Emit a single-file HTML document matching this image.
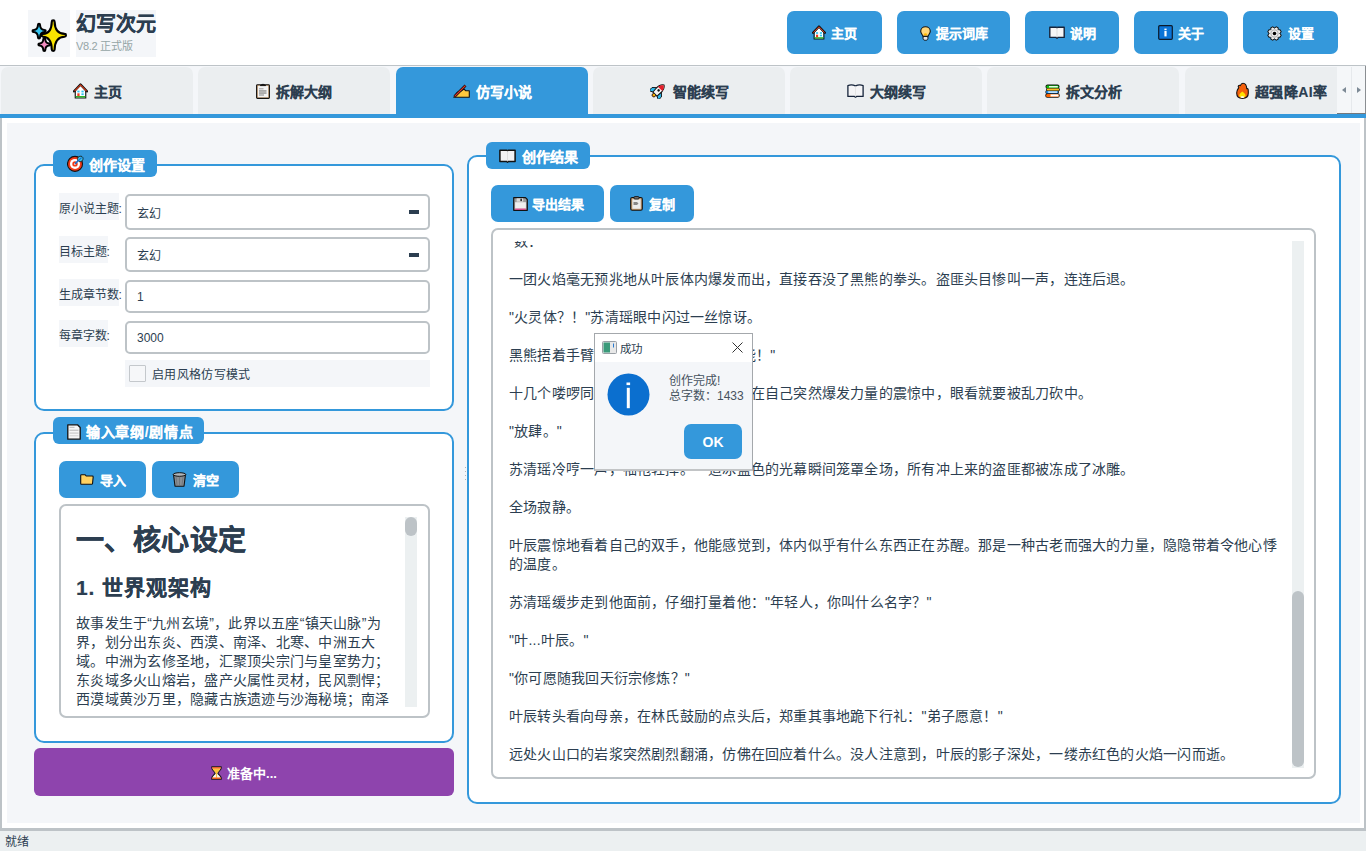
<!DOCTYPE html>
<html lang="zh-CN">
<head>
<meta charset="utf-8">
<style>
*{box-sizing:border-box;margin:0;padding:0}
html,body{width:1366px;height:851px;overflow:hidden;background:#f4f6f9}
body{position:relative;font-family:"Liberation Sans",sans-serif;color:#2c3e50}
.a{position:absolute}
svg{display:block}
.hdr{left:0;top:0;width:1366px;height:65px;background:#fff}
.hbtn{-webkit-text-stroke:0.15px currentColor;top:11px;height:43px;background:#3498db;border-radius:7px;color:#fff;font-size:13px;font-weight:bold;display:flex;align-items:center;justify-content:center;white-space:nowrap}
.hbtn svg{margin-right:5px}
.tab{-webkit-text-stroke:0.15px currentColor;top:67px;height:47px;width:192px;background:#ebeef0;border-radius:7px 7px 0 0;font-size:14px;font-weight:bold;color:#2c3e50;display:flex;align-items:center;justify-content:center;white-space:nowrap}
.tab svg{margin-right:6px}
.tab.sel{background:#3498db;color:#fff}
.gb{border:2px solid #3498db;border-radius:10px;background:#fff}
.badge{-webkit-text-stroke:0.15px currentColor;height:27px;background:#3498db;border-radius:6px;color:#fff;font-size:14px;font-weight:bold;display:flex;align-items:center;white-space:nowrap}
.btn{-webkit-text-stroke:0.15px currentColor;height:37px;background:#3498db;border-radius:7px;color:#fff;font-size:13px;font-weight:bold;display:flex;align-items:center;justify-content:center;white-space:nowrap}
.btn svg{margin-right:6px}
.lbl{left:59px;height:27px;background:#f4f6f9;font-size:12px;letter-spacing:-0.1px;color:#2c3e50;padding-top:6px;white-space:nowrap}
.inp{left:125px;width:305px;border:2px solid #bdc3c7;border-radius:5px;background:#fff;font-size:12px;color:#2c3e50;padding-left:10px;display:flex;align-items:center}
.dash{position:absolute;right:9.5px;top:50%;margin-top:-2px;width:10px;height:4px;background:#2c3e50}
.te{border:2px solid #bdc3c7;border-radius:7px;background:#fff;overflow:hidden}
.track{background:#ecf0f1}
.handle{background:#bdc3c7;border-radius:6px}
.p{position:absolute;left:0;font-size:14px;letter-spacing:0.22px;line-height:19px;white-space:nowrap;color:#2c3e50}
</style>
</head>
<body>
<!-- HEADER -->
<div class="a hdr"></div>
<div class="a" style="left:28px;top:10px;width:42px;height:47px;background:#f4f6f9"></div>
<svg class="a" style="left:25px;top:8px" width="50" height="50" viewBox="0 0 50 50">
<path d="M15.00 16.70 C15.10 20.16 16.57 21.90 19.70 22.00 A1.00 1.00 0 0 1 19.70 24.00 C16.57 24.10 15.10 25.88 15.00 29.40 A1.00 1.00 0 0 1 13.00 29.40 C12.90 25.88 11.53 24.10 8.50 24.00 A1.00 1.00 0 0 1 8.50 22.00 C11.53 21.90 12.90 20.16 13.00 16.70 A1.00 1.00 0 0 1 15.00 16.70Z" fill="#36c5f0" stroke="#000" stroke-width="2" stroke-linejoin="round"/>
<path d="M20.30 31.30 C20.40 34.16 21.51 35.40 24.20 35.50 A1.00 1.00 0 0 1 24.20 37.50 C21.51 37.60 20.40 38.98 20.30 42.00 A1.00 1.00 0 0 1 18.30 42.00 C18.20 38.98 17.09 37.60 14.40 37.50 A1.00 1.00 0 0 1 14.40 35.50 C17.09 35.40 18.20 34.16 18.30 31.30 A1.00 1.00 0 0 1 20.30 31.30Z" fill="#f38cc0" stroke="#000" stroke-width="2" stroke-linejoin="round"/>
<path d="M29.60 13.70 C29.80 21.18 33.33 25.70 39.60 25.90 A1.40 1.40 0 0 1 39.60 28.70 C33.33 28.90 29.80 33.73 29.60 41.60 A1.40 1.40 0 0 1 26.80 41.60 C26.60 33.73 23.61 28.90 18.00 28.70 A1.40 1.40 0 0 1 18.00 25.90 C23.61 25.70 26.60 21.18 26.80 13.70 A1.40 1.40 0 0 1 29.60 13.70Z" fill="#f9e400" stroke="#000" stroke-width="2.1" stroke-linejoin="round"/>
</svg>
<div class="a" style="left:76px;top:10px;width:80px;height:47px;background:#f4f6f9"></div>
<div class="a" style="left:76px;top:7.5px;font-size:20px;font-weight:bold;color:#2c3e50;white-space:nowrap;-webkit-text-stroke:0.3px #2c3e50">幻写次元</div>
<div class="a" style="left:76px;top:37px;font-size:11px;letter-spacing:-0.3px;color:#95a5a6;white-space:nowrap">V8.2 正式版</div>

<div class="a hbtn" style="left:787px;width:95px"><svg width="14" height="15" viewBox="0 0 16 17"><path d="M3 8.2 L8 3.2 L13 8.2 V15.6 H3Z" fill="#fff"/><path d="M2.4 8.2 V15.9 H13.6 V8.2" fill="none" stroke="#111" stroke-width="1.2"/><rect x="2.9" y="13.9" width="10.2" height="1.5" fill="#1db31d"/><rect x="4.6" y="8.1" width="2.4" height="1.9" fill="#30c6f2"/><rect x="9" y="8.1" width="2.4" height="1.9" fill="#30c6f2"/><rect x="9" y="11" width="2.4" height="1.9" fill="#30c6f2"/><rect x="4.6" y="11" width="2.4" height="3" fill="#f23c1c"/><path d="M1.2 8.8 L8 1.6 L14.8 8.8" fill="none" stroke="#111" stroke-width="2.6" stroke-linecap="round" stroke-linejoin="round"/><path d="M1.6 8.6 L8 2 L14.4 8.6" fill="none" stroke="#e8401c" stroke-width="1.1"/></svg>主页</div>
<div class="a hbtn" style="left:897px;width:113px"><svg width="11" height="15" viewBox="0 0 11 15" style="margin-right:5px;position:relative;top:0.8px"><path d="M5.5 0.7 C8.2 0.7 10.3 2.7 10.3 5.3 C10.3 7.3 8.6 8.6 7.9 10.4 H3.1 C2.4 8.6 0.7 7.3 0.7 5.3 C0.7 2.7 2.8 0.7 5.5 0.7Z" fill="#ffd77a" stroke="#111" stroke-width="1.1"/><ellipse cx="5.5" cy="8.4" rx="1.6" ry="1.2" fill="#ffb800"/><path d="M3.1 10.4 H7.9 V12.6 C7.9 13.6 7 14.3 5.5 14.3 C4 14.3 3.1 13.6 3.1 12.6Z" fill="#e6e6e6" stroke="#111" stroke-width="1"/></svg>提示词库</div>
<div class="a hbtn" style="left:1025px;width:94px"><svg width="16" height="13" viewBox="0 0 16 13"><path d="M0.8 1.2 H7.4 L8 1.7 L8.6 1.2 H15.2 V11.4 H9 L8 12.2 L7 11.4 H0.8Z" fill="#f6f6f6" stroke="#15233a" stroke-width="1.4" stroke-linejoin="round"/><path d="M8 1.8 V11.6" stroke="#d0d0d0" stroke-width="0.6"/></svg>说明</div>
<div class="a hbtn" style="left:1134px;width:94px"><svg width="15" height="15" viewBox="0 0 15 15"><rect x="0.7" y="0.7" width="13.6" height="13.6" rx="1" fill="#0a74d8" stroke="#0d1a2a" stroke-width="1.2"/><rect x="6.4" y="3.6" width="2.2" height="1.6" fill="#fff"/><rect x="6.4" y="6" width="2.2" height="5.4" fill="#fff"/></svg>关于</div>
<div class="a hbtn" style="left:1243px;width:95px"><svg width="15" height="15" viewBox="0 0 15 15" style="margin-right:5px;position:relative;left:-1px;top:0.5px"><path d="M8.02 2.02 L8.85 0.73 L11.33 1.76 L11.01 3.26 L11.74 3.99 L13.24 3.67 L14.27 6.15 L12.98 6.98 L12.98 8.02 L14.27 8.85 L13.24 11.33 L11.74 11.01 L11.01 11.74 L11.33 13.24 L8.85 14.27 L8.02 12.98 L6.98 12.98 L6.15 14.27 L3.67 13.24 L3.99 11.74 L3.26 11.01 L1.76 11.33 L0.73 8.85 L2.02 8.02 L2.02 6.98 L0.73 6.15 L1.76 3.67 L3.26 3.99 L3.99 3.26 L3.67 1.76 L6.15 0.73 L6.98 2.02Z" fill="#eeeeee" stroke="#111" stroke-width="1" stroke-linejoin="round"/><circle cx="7.5" cy="7.5" r="3.6" fill="none" stroke="#b8b8b8" stroke-width="1.2"/><circle cx="7.5" cy="7.5" r="1.8" fill="#000"/></svg>设置</div>

<!-- TAB BAR -->
<div class="a" style="left:0;top:65px;width:1366px;height:1px;background:#bdc3c7"></div>
<div class="a tab" style="left:1px"><svg width="15" height="16" viewBox="0 0 16 17"><path d="M3 8.2 L8 3.2 L13 8.2 V15.6 H3Z" fill="#fff"/><path d="M2.4 8.2 V15.9 H13.6 V8.2" fill="none" stroke="#111" stroke-width="1.2"/><rect x="2.9" y="13.9" width="10.2" height="1.5" fill="#1db31d"/><rect x="4.6" y="8.1" width="2.4" height="1.9" fill="#30c6f2"/><rect x="9" y="8.1" width="2.4" height="1.9" fill="#30c6f2"/><rect x="9" y="11" width="2.4" height="1.9" fill="#30c6f2"/><rect x="4.6" y="11" width="2.4" height="3" fill="#f23c1c"/><path d="M1.2 8.8 L8 1.6 L14.8 8.8" fill="none" stroke="#111" stroke-width="2.6" stroke-linecap="round" stroke-linejoin="round"/><path d="M1.6 8.6 L8 2 L14.4 8.6" fill="none" stroke="#e8401c" stroke-width="1.1"/></svg>主页</div>
<div class="a tab" style="left:198px"><svg width="14" height="16" viewBox="0 0 14 16"><rect x="0.6" y="1.7" width="12.8" height="13.7" rx="0.9" fill="#c9a47c" stroke="#111" stroke-width="1.1"/><rect x="1.9" y="2.9" width="10.2" height="11.3" fill="#f3f3f3"/><path d="M4.3 2.6 Q7 -0.3 9.7 2.6Z" fill="#222" stroke="#111" stroke-width="0.9"/><rect x="3" y="5.3" width="4.5" height="1" fill="#9a9a9a"/><rect x="3" y="7.3" width="7.5" height="1.3" fill="#8a8a8a"/><rect x="3" y="9.4" width="7.5" height="1.3" fill="#8a8a8a"/><rect x="3" y="11.4" width="5" height="1.2" fill="#9a9a9a"/></svg>拆解大纲</div>
<div class="a tab sel" style="left:396px"><svg width="17" height="14" viewBox="0 0 17 14"><path d="M0.8 13.2 L4 8.5 C5 7.3 6.5 7 8 7 L11 5 L12.8 6.8 L16.3 6.8 V13.2 Z" fill="#ffc83d" stroke="#111" stroke-width="1.1" stroke-linejoin="round"/><path d="M1.5 12.5 L12.5 1.5" stroke="#111" stroke-width="2.6"/><path d="M1.6 12.4 L12.4 1.6" stroke="#e8352a" stroke-width="1.2"/></svg>仿写小说</div>
<div class="a tab" style="left:593px"><svg width="17" height="17" viewBox="0 0 24 24"><g transform="rotate(45 12 12)"><path d="M8.3 10 L2.6 15.5 V21.5 L8.8 18.8Z M15.7 10 L21.4 15.5 V21.5 L15.2 18.8Z" fill="#2cb9ee" stroke="#111" stroke-width="1.3" stroke-linejoin="round"/><ellipse cx="12" cy="21" rx="2.6" ry="2.8" fill="#f77f00" stroke="#111" stroke-width="1.1"/><ellipse cx="12" cy="20.6" rx="1.3" ry="1.6" fill="#ffd000"/><path d="M12 0.8 C16 3.5 17 8 16.5 13 L16 19 H8 L7.5 13 C7 8 8 3.5 12 0.8Z" fill="#f4f4f4" stroke="#111" stroke-width="1.4" stroke-linejoin="round"/><path d="M12 1.6 C14.8 3.6 16 6 16.3 8.8 H7.7 C8 6 9.2 3.6 12 1.6Z" fill="#e61e2a"/><circle cx="12" cy="11.8" r="1.8" fill="#111"/></g></svg>智能续写</div>
<div class="a tab" style="left:790px"><svg width="17" height="14" viewBox="0 0 17 14"><path d="M0.9 1.6 C3 0.8 6 0.8 8.5 1.9 C11 0.8 14 0.8 16.1 1.6 V12.4 H9.5 L8.5 13.2 L7.5 12.4 H0.9Z" fill="#f4f4f6" stroke="#15233a" stroke-width="1.3" stroke-linejoin="round"/><path d="M8.5 1.9 V12.6" stroke="#d8d8d8" stroke-width="0.6"/></svg>大纲续写</div>
<div class="a tab" style="left:987px"><svg width="15" height="14" viewBox="0 0 15 14"><rect x="0.5" y="0.6" width="14" height="4.2" rx="2" fill="#111"/><rect x="1" y="4" width="14" height="3" rx="1.5" fill="#111"/><rect x="0.3" y="6.3" width="13.7" height="3.6" rx="1.8" fill="#111"/><rect x="0.3" y="9.2" width="14.4" height="4.5" rx="2" fill="#111"/><rect x="1.3" y="1.5" width="12.4" height="2.5" rx="1.2" fill="#13c313"/><rect x="4" y="2.1" width="8.8" height="1.3" fill="#fff"/><rect x="1.8" y="4.6" width="12.4" height="1.8" rx="0.9" fill="#fbbf24"/><rect x="1" y="7" width="12.2" height="2.2" rx="1.1" fill="#1e90f0"/><rect x="3.2" y="7.5" width="9" height="1.2" fill="#fff"/><rect x="1" y="9.9" width="13" height="3.1" rx="1.5" fill="#fa6400"/><rect x="5.5" y="10.4" width="8" height="2.1" fill="#fff"/></svg>拆文分析</div>
<div class="a tab" style="left:1185px;width:152px;justify-content:flex-start;padding-left:51px;border-radius:7px 0 0 0;letter-spacing:0.4px"><svg width="13" height="17" viewBox="0 0 13 17"><path d="M6.5 16.4 C2.8 16.4 0.7 14.2 0.7 11 C0.7 8.5 1.8 7 2.8 5.6 C2.2 5.2 2 4.2 2.6 3.6 C3.2 3 4 3.2 4.3 3.6 C4.8 2.3 5.8 1.2 7 1.2 C9.4 1.2 10.6 4 10.8 6.8 C11.2 6.6 11.8 6.8 12.1 7.2 C12.3 8.4 12.3 9.8 12.3 11 C12.3 14.2 10.2 16.4 6.5 16.4Z" fill="#f4600c" stroke="#111" stroke-width="1.1" stroke-linejoin="round"/><path d="M6.5 15.8 C4.2 15.8 3.2 14.7 3.2 13.5 C3.2 12 4.6 10.5 6.3 9.4 C8 10.5 9.6 12 9.6 13.5 C9.6 14.7 8.6 15.8 6.5 15.8Z" fill="#ffe100"/><ellipse cx="6.4" cy="15.1" rx="1.9" ry="0.9" fill="#fff"/></svg>超强降AI率</div>
<div class="a" style="left:1337px;top:66px;width:29px;height:48px;background:#f5f7f9;border-right:1px solid #8a8e92;border-bottom:1px solid #74787c"></div>
<div class="a" style="left:1351px;top:67px;width:1px;height:46px;background:#e6e9ec"></div>
<div class="a" style="left:1342px;top:87px;width:0;height:0;border-top:3.5px solid transparent;border-bottom:3.5px solid transparent;border-right:4px solid #7d8a96"></div>
<div class="a" style="left:1357px;top:87px;width:0;height:0;border-top:3.5px solid transparent;border-bottom:3.5px solid transparent;border-left:4px solid #7d8a96"></div>
<div class="a" style="left:0;top:114px;width:1366px;height:4px;background:#3498db"></div>

<!-- PANE -->
<div class="a" style="left:0;top:118px;width:1366px;height:713px;background:#fff;border-left:2px solid #bdc3c7;border-right:2px solid #bdc3c7;border-bottom:3px solid #bdc3c7"></div>
<div class="a" style="left:7px;top:123px;width:1353px;height:700px;background:#f4f6f9"></div>

<!-- LEFT GROUP 1 -->
<div class="a gb" style="left:34px;top:164px;width:420px;height:247px"></div>
<div class="a badge" style="left:53px;top:150px;width:104px;padding-left:14px"><svg width="17" height="17" viewBox="0 0 17 17" style="margin-right:5px"><circle cx="8" cy="8.9" r="7.5" fill="#f03a17" stroke="#111" stroke-width="1.1"/><circle cx="8" cy="8.9" r="5" fill="#fff"/><circle cx="8" cy="8.9" r="2.7" fill="#f03a17"/><circle cx="8" cy="8.9" r="0.9" fill="#fff"/><path d="M8 8.9 L12.6 4.3" stroke="#1670d0" stroke-width="1.6"/><path d="M10.6 3.6 C11 2 12.5 1 14 1.2 C15.5 1.4 16.3 2.8 16 4.2 C15.6 5.8 14.2 6.8 12.6 6.6 C11.4 6.4 10.4 5 10.6 3.6Z" fill="#34c6f2" stroke="#111" stroke-width="0.8"/><path d="M11.2 5.9 L14.6 2.5" stroke="#1670d0" stroke-width="1.1"/></svg>创作设置</div>
<div class="a lbl" style="top:193px;width:60px">原小说主题:</div>
<div class="a inp" style="top:194px;height:36px">玄幻<div class="dash"></div></div>
<div class="a lbl" style="top:236px;width:49px">目标主题:</div>
<div class="a inp" style="top:237px;height:35px">玄幻<div class="dash"></div></div>
<div class="a lbl" style="top:279px;width:60px">生成章节数:</div>
<div class="a inp" style="top:280px;height:33px">1</div>
<div class="a lbl" style="top:320px;width:49px">每章字数:</div>
<div class="a inp" style="top:321px;height:33px">3000</div>
<div class="a" style="left:125px;top:360px;width:305px;height:27px;background:#f4f6f9"></div>
<div class="a" style="left:129px;top:365px;width:17px;height:17px;border:1px solid #c4c8cc;border-radius:1px;background:#f6f7f9"></div>
<div class="a" style="left:152px;top:365px;font-size:12px;letter-spacing:0.35px;color:#2c3e50;white-space:nowrap">启用风格仿写模式</div>

<!-- LEFT GROUP 2 -->
<div class="a gb" style="left:34px;top:432px;width:420px;height:311px"></div>
<div class="a badge" style="left:53px;top:417px;width:151px;padding-left:13px;letter-spacing:0.7px"><svg width="14" height="16" viewBox="0 0 14 16" style="margin-right:6px;position:relative;top:1px;left:0.5px"><path d="M0.8 0.8 H10.5 L13.2 3.5 V15.2 H0.8Z" fill="#f6f6f6" stroke="#111" stroke-width="1.3" stroke-linejoin="round"/><rect x="2.5" y="2.8" width="5" height="1.2" fill="#c4c4c4"/><rect x="2.5" y="5.6" width="9" height="1.4" fill="#c8c8c8"/><rect x="2.5" y="8.4" width="9" height="1.4" fill="#d0d0d0"/><rect x="2.5" y="11" width="9" height="1.4" fill="#dcdcdc"/></svg>输入章纲/剧情点</div>
<div class="a btn" style="left:59px;top:461px;width:87px"><svg width="14" height="11" viewBox="0 0 14 11"><path d="M0.7 1.5 C0.7 1 1 0.7 1.5 0.7 H5 L6.2 2 H12.3 C12.8 2 13.2 2.4 13.2 2.9 L12.5 9.6 C12.4 10 12.1 10.3 11.6 10.3 H1.5 C1 10.3 0.7 10 0.7 9.5Z" fill="#ffd160" stroke="#111" stroke-width="1.1" stroke-linejoin="round"/></svg>导入</div>
<div class="a btn" style="left:152px;top:461px;width:87px"><svg width="15" height="15" viewBox="0 0 15 15"><path d="M1.5 2.5 H13.5 L12 14.2 H3Z" fill="#8a8f94" stroke="#111" stroke-width="1.1" stroke-linejoin="round"/><ellipse cx="7.5" cy="2.5" rx="6.3" ry="1.8" fill="#b0b5ba" stroke="#111" stroke-width="1"/><path d="M4 5 L5 13 M7.5 5 V13 M11 5 L10 13" stroke="#6d7278" stroke-width="0.8"/></svg>清空</div>
<div class="a te" style="left:59px;top:504px;width:371px;height:214px">
  <div class="a" style="left:15px;top:11px;width:340px;height:190px;overflow:hidden">
    <div class="p" style="top:4px;font-size:28px;letter-spacing:0.44px;line-height:40px;font-weight:bold;-webkit-text-stroke:0.3px #2c3e50">一、核心设定</div>
    <div class="p" style="top:56px;font-size:21px;letter-spacing:0.9px;line-height:30px;font-weight:bold;-webkit-text-stroke:0.2px #2c3e50">1. 世界观架构</div>
    <div class="p" style="top:96.5px;letter-spacing:0.26px">故事发生于“九州玄境”，此界以五座“镇天山脉”为<br>界，划分出东炎、西漠、南泽、北寒、中洲五大<br>域。中洲为玄修圣地，汇聚顶尖宗门与皇室势力；<br>东炎域多火山熔岩，盛产火属性灵材，民风剽悍；<br>西漠域黄沙万里，隐藏古族遗迹与沙海秘境；南泽<br>域瘴气弥漫</div>
  </div>
  <div class="a track" style="left:344px;top:11px;width:12px;height:190px"></div>
  <div class="a handle" style="left:344px;top:11px;width:12px;height:19px"></div>
</div>

<!-- PURPLE BUTTON -->
<div class="a" style="left:34px;top:748px;width:420px;height:48px;background:#8e44ad;border-radius:6px;color:#fff;font-size:13px;font-weight:bold;display:flex;align-items:center;justify-content:center;white-space:nowrap"><svg width="11" height="14" viewBox="0 0 11 14" style="margin-right:5px;position:relative;top:1px"><path d="M0.8 0.8 H10.2 V2 C10.2 4 7.2 5.6 6.8 7 C7.2 8.4 10.2 10 10.2 12 V13.2 H0.8 V12 C0.8 10 3.8 8.4 4.2 7 C3.8 5.6 0.8 4 0.8 2Z" fill="#f8f8f8" stroke="#111" stroke-width="1.1" stroke-linejoin="round"/><path d="M1.5 2.2 H9.5 C9.3 4 6.9 5.6 6.4 7 H4.6 C4.1 5.6 1.7 4 1.5 2.2Z" fill="#fcc33a"/><rect x="1.2" y="1.2" width="8.6" height="1.2" fill="#f2460f"/><rect x="4.9" y="6.8" width="1.2" height="4.8" fill="#fcc33a"/><rect x="1.2" y="11.5" width="8.6" height="1.4" fill="#f0540f"/></svg>准备中...</div>

<div class="a" style="left:465px;top:467px;width:1px;height:1px;background:#b0b4b8"></div><div class="a" style="left:465px;top:471px;width:1px;height:1px;background:#b0b4b8"></div><div class="a" style="left:465px;top:475px;width:1px;height:1px;background:#b0b4b8"></div><div class="a" style="left:465px;top:479px;width:1px;height:1px;background:#b0b4b8"></div>
<!-- RIGHT GROUP -->
<div class="a gb" style="left:467px;top:155px;width:874px;height:649px"></div>
<div class="a badge" style="left:486px;top:142px;width:104px;padding-left:13px"><svg width="17" height="14" viewBox="0 0 17 14" style="margin-right:6px"><path d="M0.9 1.2 H7.8 L8.5 1.8 L9.2 1.2 H16.1 V12.4 H9.5 L8.5 13.2 L7.5 12.4 H0.9Z" fill="#f2f2f4" stroke="#111" stroke-width="1.5" stroke-linejoin="round"/><path d="M8.5 1.9 V12.6" stroke="#d0d0d0" stroke-width="0.6"/></svg>创作结果</div>
<div class="a btn" style="left:491px;top:185px;width:113px"><svg width="15" height="14" viewBox="0 0 15 14" style="margin-right:5px;position:relative;left:1px"><path d="M0.7 0.7 H12.5 L14.3 2.5 V13.3 H0.7Z" fill="#9a9a9a" stroke="#111" stroke-width="1.2" stroke-linejoin="round"/><rect x="3.6" y="1.3" width="6.6" height="3.4" fill="#dadada"/><rect x="7.4" y="1.7" width="1.5" height="2.4" fill="#222"/><rect x="2.1" y="5.2" width="10.8" height="6.5" fill="#efefef"/><rect x="2.1" y="11.6" width="10.8" height="1.2" fill="#e8458f"/></svg>导出结果</div>
<div class="a btn" style="left:610px;top:185px;width:84px"><svg width="13" height="15" viewBox="0 0 13 15"><rect x="0.7" y="1.5" width="11.6" height="12.8" rx="1.5" fill="#c49a6c" stroke="#111" stroke-width="1.1"/><rect x="2.3" y="3.3" width="8.4" height="9.5" fill="#ececec"/><rect x="4" y="0.6" width="5" height="2.4" rx="0.8" fill="#777" stroke="#111" stroke-width="0.9"/><path d="M3.5 6 L7 6 L8.5 7.5 L7 9 L3.5 9Z" fill="#888"/></svg>复制</div>
<div class="a te" style="left:491px;top:228px;width:825px;height:551px">
  <div class="a" style="left:0;top:11px;width:790px;height:527px;overflow:hidden">
    <div class="p" style="left:21px;top:-9px">数：</div>
    <div class="p" style="left:16px;top:29px;line-height:19px">一团火焰毫无预兆地从叶辰体内爆发而出，直接吞没了黑熊的拳头。盗匪头目惨叫一声，连连后退。<br><br>"火灵体？！"苏清瑶眼中闪过一丝惊讶。<br><br>黑熊捂着手臂，满脸惊骇："这怎么可能！"<br><br>十几个喽啰同时扑了上来。叶辰还沉浸在自己突然爆发力量的震惊中，眼看就要被乱刀砍中。<br><br>"放肆。"<br><br>苏清瑶冷哼一声，袖袍轻挥。一道冰蓝色的光幕瞬间笼罩全场，所有冲上来的盗匪都被冻成了冰雕。<br><br>全场寂静。<br><br>叶辰震惊地看着自己的双手，他能感觉到，体内似乎有什么东西正在苏醒。那是一种古老而强大的力量，隐隐带着令他心悸<br>的温度。<br><br>苏清瑶缓步走到他面前，仔细打量着他："年轻人，你叫什么名字？"<br><br>"叶...叶辰。"<br><br>"你可愿随我回天衍宗修炼？"<br><br>叶辰转头看向母亲，在林氏鼓励的点头后，郑重其事地跪下行礼："弟子愿意！"<br><br>远处火山口的岩浆突然剧烈翻涌，仿佛在回应着什么。没人注意到，叶辰的影子深处，一缕赤红色的火焰一闪而逝。</div>
  </div>
  <div class="a track" style="left:799px;top:11px;width:12px;height:527px"></div>
  <div class="a handle" style="left:799px;top:361px;width:12px;height:176px"></div>
</div>

<!-- DIALOG -->
<div class="a" style="left:594px;top:333px;width:159px;height:138px;background:#f4f6f9;border:1px solid #a4a8ac;border-bottom:2px solid #c2c4c6"></div>
<div class="a" style="left:595px;top:334px;width:157px;height:28px;background:#fff"></div>
<svg class="a" style="left:602px;top:341px" width="15" height="13" viewBox="0 0 15 13"><rect x="0.5" y="0.5" width="14" height="12" rx="1" fill="#e8e8e8" stroke="#9aa0a6" stroke-width="1"/><rect x="1.5" y="1.5" width="6.5" height="10" fill="#3a9a7a"/><rect x="11" y="2.5" width="1" height="4" fill="#2a7ad0"/></svg>
<div class="a" style="left:620px;top:340px;font-size:11.5px;color:#2c3e50;white-space:nowrap">成功</div>
<svg class="a" style="left:732px;top:342px" width="11" height="11" viewBox="0 0 11 11"><path d="M0.5 0.5 L10.5 10.5 M10.5 0.5 L0.5 10.5" stroke="#333" stroke-width="1"/></svg>
<svg class="a" style="left:607px;top:373px" width="43" height="43" viewBox="0 0 43 43"><circle cx="21.5" cy="21.5" r="21" fill="#0b6fcf"/><rect x="19.5" y="9.5" width="3.6" height="2.6" fill="#fff"/><rect x="19.8" y="14.8" width="3" height="20.4" fill="#fff"/></svg>
<div class="a" style="left:669px;top:374px;font-size:12px;line-height:15px;color:#46525e;white-space:nowrap">创作完成!<br>总字数：1433</div>
<div class="a" style="left:684px;top:424px;width:58px;height:35px;background:#3498db;border-radius:7px;color:#fff;font-size:14px;font-weight:bold;display:flex;align-items:center;justify-content:center">OK</div>

<!-- STATUS -->
<div class="a" style="left:0;top:831px;width:1366px;height:20px;background:#ecf0f1"></div>
<div class="a" style="left:5px;top:831.5px;font-size:12px;color:#2c3e50;white-space:nowrap">就绪</div>
</body>
</html>
